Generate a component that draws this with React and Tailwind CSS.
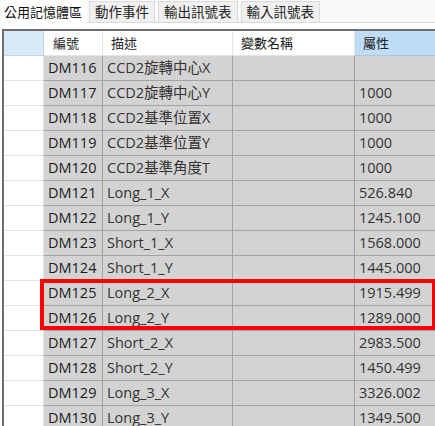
import { useState } from "react"

const tabs = ["公用記憶體區", "動作事件", "輸出訊號表", "輸入訊號表"]

const rows = [
  ["DM116", "CCD2旋轉中心X", "", ""],
  ["DM117", "CCD2旋轉中心Y", "", "1000"],
  ["DM118", "CCD2基準位置X", "", "1000"],
  ["DM119", "CCD2基準位置Y", "", "1000"],
  ["DM120", "CCD2基準角度T", "", "1000"],
  ["DM121", "Long_1_X", "", "526.840"],
  ["DM122", "Long_1_Y", "", "1245.100"],
  ["DM123", "Short_1_X", "", "1568.000"],
  ["DM124", "Short_1_Y", "", "1445.000"],
  ["DM125", "Long_2_X", "", "1915.499"],
  ["DM126", "Long_2_Y", "", "1289.000"],
  ["DM127", "Short_2_X", "", "2983.500"],
  ["DM128", "Short_2_Y", "", "1450.499"],
  ["DM129", "Long_3_X", "", "3326.002"],
  ["DM130", "Long_3_Y", "", "1349.500"],
]

const font = { fontFamily: "'Open Sans', 'Noto Sans CJK TC', sans-serif" }

export default function App() {
  const [active, setActive] = useState(0)

  return (
    <div
      className="w-[435px] h-[426px] overflow-hidden bg-white text-[#222]"
      style={font}
    >
      {/* Tabs */}
      <div className="flex items-end h-[23px] border-b border-[#dadada] bg-[#fafafa]">
        {tabs.map((t, i) => (
          <button
            key={t}
            onClick={() => setActive(i)}
            className={
              i === active
                ? "h-[23px] px-[4px] bg-white text-[13px] leading-[20px] text-[#111] -mb-px"
                : "h-[21px] px-[5px] ml-[3px] bg-[#f0f0f0] border border-b-0 border-[#dadada] text-[13.5px] leading-[19px] text-[#222]"
            }
          >
            {t}
          </button>
        ))}
      </div>

      {/* Grid */}
      <div className="relative mt-[6px] ml-[2px] border-l-2 border-t-2 border-[#6e6e6e]">
        <div className="flex h-[25px] text-[13px]">
          <div className="w-[40px] shrink-0 bg-[#d9e9f8] border-r border-b border-[#c8d4df]" />
          <div className="w-[59px] shrink-0 bg-white border-r border-b border-[#e4e4e4] pl-[9px] leading-[24px]">編號</div>
          <div className="w-[130px] shrink-0 bg-white border-r border-b border-[#e4e4e4] pl-[8px] leading-[24px]">描述</div>
          <div className="w-[122px] shrink-0 bg-white border-r border-b border-[#e4e4e4] pl-[8px] leading-[24px]">變數名稱</div>
          <div className="flex-1 bg-[#bedcf4] border-b border-[#a9c6dd] pl-[8px] leading-[24px]">屬性</div>
        </div>
        {rows.map((r) => (
          <div key={r[0]} className="flex h-[25px] text-[14.5px]">
            <div className="w-[40px] shrink-0 bg-white border-r border-b border-[#e2e2e2]" />
            <div className="w-[59px] shrink-0 bg-[#d3d3d3] border-r border-b border-[#a3a3a3] pl-[4px] leading-[24px] text-[#1c1c1c]">{r[0]}</div>
            <div className="w-[130px] shrink-0 bg-[#d3d3d3] border-r border-b border-[#a3a3a3] pl-[4px] leading-[24px] text-[#333] whitespace-nowrap">{r[1]}</div>
            <div className="w-[122px] shrink-0 bg-[#d3d3d3] border-r border-b border-[#a3a3a3] pl-[4px] leading-[24px]">{r[2]}</div>
            <div className="flex-1 bg-[#d3d3d3] border-b border-[#a3a3a3] pl-[4px] leading-[24px] text-[#333]">{r[3]}</div>
          </div>
        ))}

        {/* highlight over DM125 / DM126 */}
        <div className="absolute left-[36px] top-[248px] w-[396px] h-[51px] border-4 border-[#ff0000] pointer-events-none" />
      </div>
    </div>
  )
}
